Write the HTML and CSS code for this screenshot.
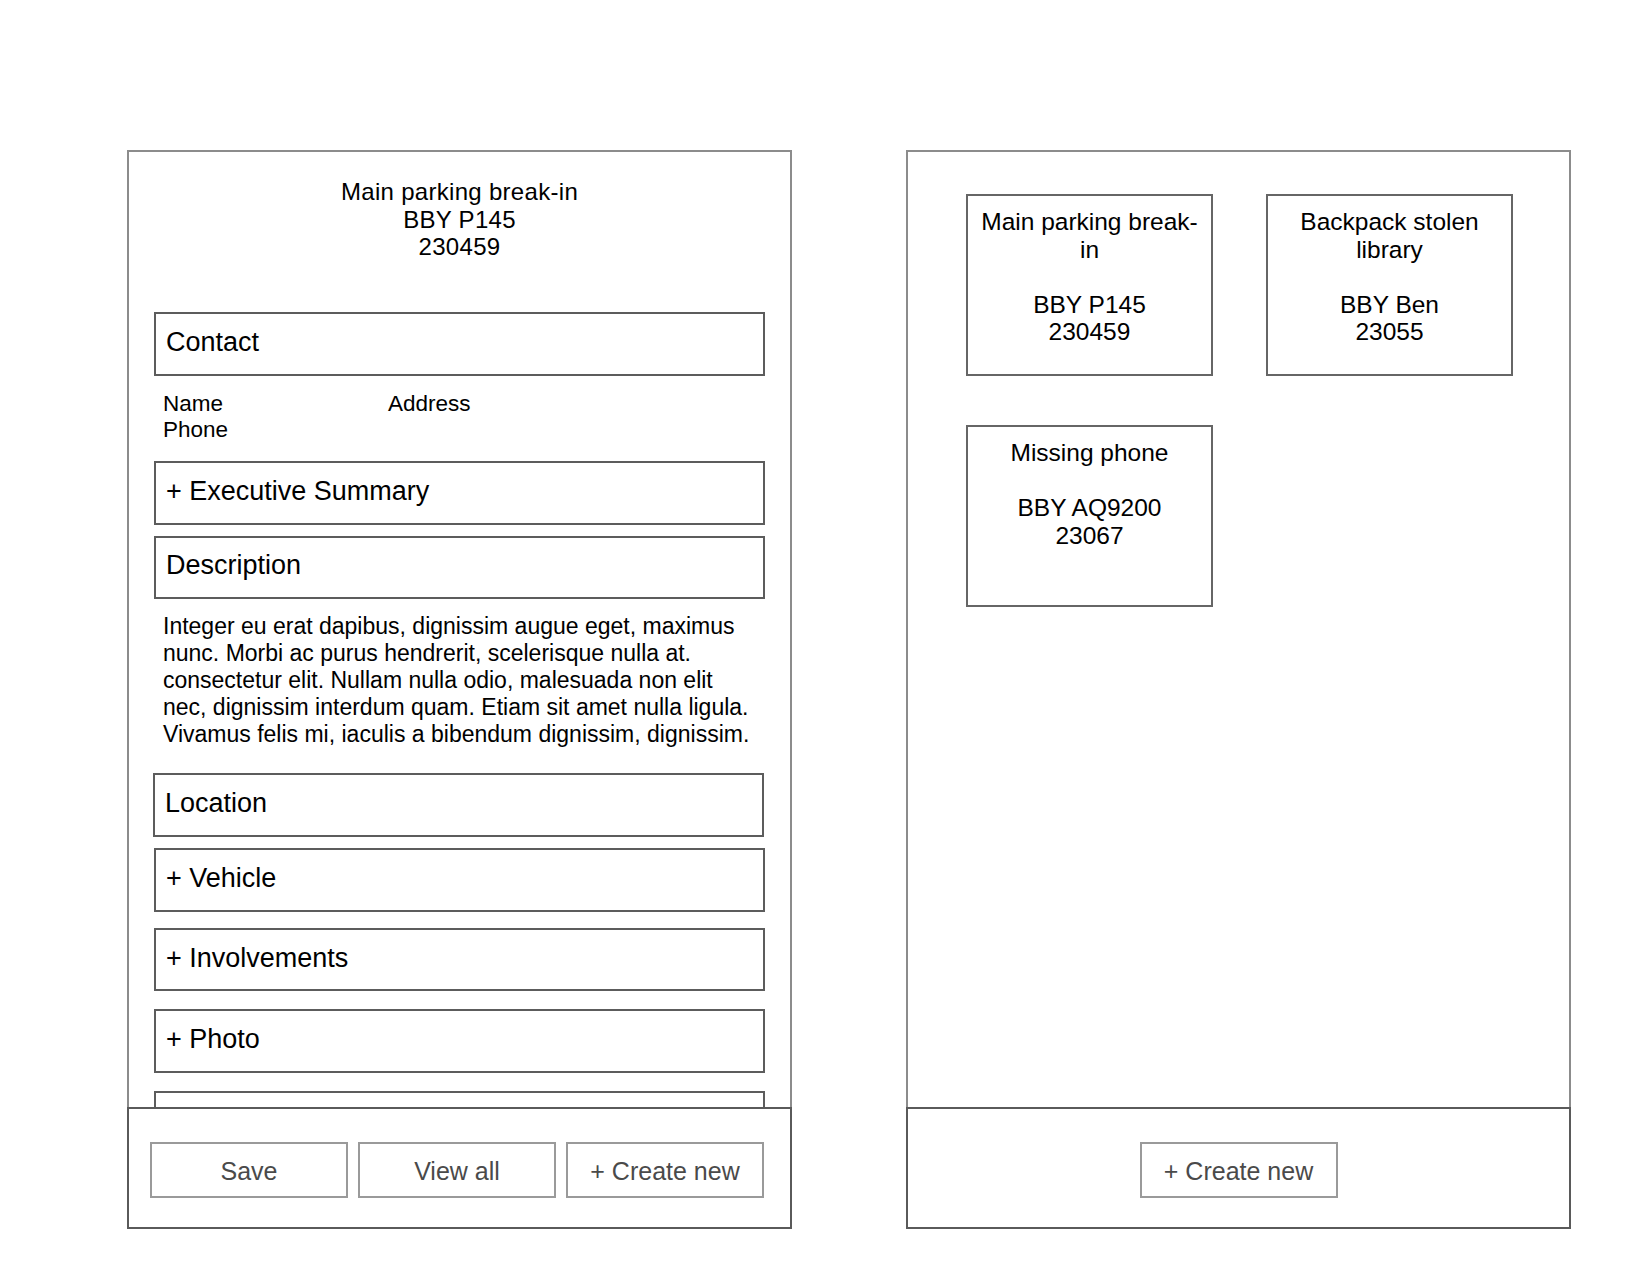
FILE: index.html
```html
<!DOCTYPE html>
<html lang="en">
<head>
<meta charset="utf-8">
<title>Incident reports wireframe</title>
<link rel="stylesheet" href="styles.css">
</head>
<body>
<div class="page">
  <section class="panel">
    <div class="panel-body">
      <div class="report-title">
        <div>Main parking break-in</div>
        <div>BBY P145</div>
        <div>230459</div>
      </div>

      <div class="section section-contact">Contact</div>
      <div class="contact-info">
        <div>Name</div><div>Address</div>
        <div>Phone</div><div></div>
      </div>

      <div class="section section-exec">+ Executive Summary</div>
      <div class="section section-desc">Description</div>
      <p class="desc-text">Integer eu erat dapibus, dignissim augue eget, maximus<br>nunc. Morbi ac purus hendrerit, scelerisque nulla at.<br>consectetur elit. Nullam nulla odio, malesuada non elit<br>nec, dignissim interdum quam. Etiam sit amet nulla ligula.<br>Vivamus felis mi, iaculis a bibendum dignissim, dignissim.</p>

      <div class="section section-location">Location</div>
      <div class="section section-vehicle">+ Vehicle</div>
      <div class="section section-involve">+ Involvements</div>
      <div class="section section-photo">+ Photo</div>
      <div class="section section-next"></div>
    </div>
    <div class="panel-footer">
      <div class="btn">Save</div>
      <div class="btn">View all</div>
      <div class="btn">+ Create new</div>
    </div>
  </section>

  <section class="panel">
    <div class="panel-body">
      <div class="cards">
        <div class="card">
          <p class="card-title">Main parking break-in</p>
          <p class="card-code">BBY P145<br>230459</p>
        </div>
        <div class="card">
          <p class="card-title">Backpack stolen library</p>
          <p class="card-code">BBY Ben<br>23055</p>
        </div>
        <div class="card">
          <p class="card-title">Missing phone</p>
          <p class="card-code">BBY AQ9200<br>23067</p>
        </div>
      </div>
    </div>
    <div class="panel-footer panel-footer-center">
      <div class="btn">+ Create new</div>
    </div>
  </section>
</div>
</body>
</html>
```

FILE: styles.css
```css
html, body {
  margin: 0;
  padding: 0;
  background: #ffffff;
}

body {
  font-family: "Liberation Sans", Arial, Helvetica, sans-serif;
  color: #000;
}

.page {
  display: flex;
  align-items: flex-start;
  gap: 114px;
  padding: 150px 0 0 127px;
}

.panel {
  box-sizing: border-box;
  width: 665px;
  height: 1079px;
  border: 2px solid #8c8c8c;
  display: flex;
  flex-direction: column;
  background: #fff;
}

.panel-body {
  flex: 1;
  min-height: 0;
  overflow: hidden;
}

.report-title {
  margin-top: 26px;
  text-align: center;
  font-size: 24px;
  line-height: 27.5px;
  letter-spacing: 0.3px;
}

.section {
  box-sizing: border-box;
  width: 611px;
  height: 64px;
  margin-left: 25px;
  border: 2px solid #5c5c5c;
  padding: 13px 10px 0 10px;
  font-size: 27px;
  line-height: 31px;
}

.section-contact { margin-top: 51px; }
.section-exec { margin-top: 17px; }
.section-desc { margin-top: 11px; height: 63px; padding-top: 12px; }
.section-location { margin-top: 25px; margin-left: 24px; }
.section-vehicle { margin-top: 11px; }
.section-involve { margin-top: 16px; height: 63px; }
.section-photo { margin-top: 18px; }
.section-next { margin-top: 18px; }

.contact-info {
  display: grid;
  grid-template-columns: 225px auto;
  margin: 15px 0 0 34px;
  font-size: 22.5px;
  line-height: 26.5px;
}

.desc-text {
  margin: 14px 0 0 34px;
  font-size: 23px;
  line-height: 27px;
  white-space: nowrap;
}

.panel-footer {
  box-sizing: border-box;
  height: 122px;
  margin: 0 -2px -2px -2px;
  border: 2px solid #5a5a5a;
  background: #fff;
  display: flex;
  align-items: flex-start;
  gap: 10px;
  padding: 33px 0 0 21px;
}

.panel-footer-center {
  justify-content: center;
  padding-left: 0;
}

.btn {
  box-sizing: border-box;
  width: 198px;
  height: 56px;
  border: 2px solid #9a9a9a;
  color: #4a4a4a;
  font-size: 25px;
  display: flex;
  align-items: center;
  justify-content: center;
  padding-top: 2px;
}

.cards {
  display: grid;
  grid-template-columns: 247px 247px;
  column-gap: 53px;
  row-gap: 49px;
  padding: 42px 0 0 58px;
}

.card {
  box-sizing: border-box;
  height: 182px;
  border: 2px solid #666;
  padding: 12px 8px 0 8px;
  text-align: center;
  font-size: 24.5px;
  line-height: 27.5px;
}

.card-title {
  margin: 0;
}

.card-code {
  margin: 27.5px 0 0 0;
}
```
